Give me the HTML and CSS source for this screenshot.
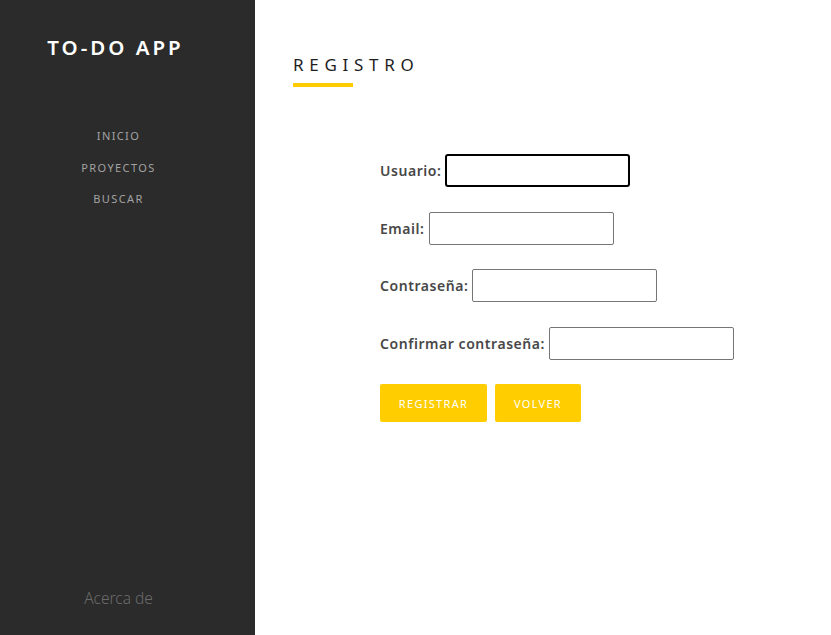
FILE: index.html
```html
<!DOCTYPE html>
<html lang="es">
<head>
<meta charset="utf-8">
<title>TO-DO APP - Registro</title>
<link rel="stylesheet" href="styles.css">
</head>
<body>
<div class="layout">
  <aside class="sidebar">
    <div class="brand">TO-DO APP</div>
    <nav class="nav">
      <a class="nav-link" href="#">INICIO</a>
      <a class="nav-link" href="#">PROYECTOS</a>
      <a class="nav-link" href="#">BUSCAR</a>
    </nav>
    <div class="about">Acerca de</div>
  </aside>
  <main class="main">
    <h1 class="page-title">REGISTRO</h1>
    <div class="title-bar"></div>
    <form class="form">
      <div class="row"><label class="label">Usuario:</label><input class="input input-focus" type="text"></div>
      <div class="row"><label class="label">Email:</label><input class="input" type="text"></div>
      <div class="row"><label class="label">Contraseña:</label><input class="input" type="password"></div>
      <div class="row"><label class="label">Confirmar contraseña:</label><input class="input" type="password"></div>
      <div class="actions">
        <button class="btn btn-register" type="button">REGISTRAR</button>
        <button class="btn btn-back" type="button">VOLVER</button>
      </div>
    </form>
  </main>
</div>
</body>
</html>
```
FILE: styles.css
```css
* { box-sizing: border-box; }
html, body { margin: 0; height: 100%; }
body {
  font-family: "Noto Sans", "Lato", sans-serif;
  background: #fff;
}
.layout {
  display: flex;
  height: 635px;
}
.sidebar {
  width: 255px;
  flex-shrink: 0;
  background: #2b2b2b;
  display: flex;
  flex-direction: column;
  align-items: center;
  padding: 33px 18px 0 0;
}
.brand {
  color: #fff;
  font-size: 20.5px;
  font-weight: 600;
  letter-spacing: 3px;
  line-height: 28px;
  margin-left: -6px;
}
.nav {
  display: flex;
  flex-direction: column;
  align-items: center;
  margin-top: 65px;
  gap: 12px;
}
.nav-link {
  color: #a3a3a3;
  font-size: 11px;
  font-weight: 400;
  letter-spacing: 1.4px;
  text-decoration: none;
  line-height: 19.5px;
}
.about {
  margin-top: auto;
  margin-bottom: 26px;
  color: #6a6a6a;
  font-size: 15.5px;
  font-weight: 300;
}
.main {
  flex: 1;
  padding: 52px 0 0 38px;
}
.page-title {
  margin: 0;
  font-size: 17px;
  font-weight: 400;
  letter-spacing: 5.7px;
  color: #1e1e1e;
  line-height: 26px;
}
.title-bar {
  width: 60px;
  height: 4px;
  background: #ffcc00;
  margin-top: 5px;
}
.form {
  margin-top: 67px;
  margin-left: 87px;
  display: flex;
  flex-direction: column;
  gap: 24.5px;
}
.row {
  display: flex;
  align-items: center;
  gap: 4px;
}
.label {
  font-size: 14px;
  font-weight: 600;
  letter-spacing: 0.55px;
  color: #484848;
}
.input {
  width: 185px;
  height: 33px;
  border: 1px solid #767676;
  border-radius: 2px;
  background: #fff;
  font: inherit;
}
.input-focus {
  border: 2px solid #000;
  border-radius: 3px;
  outline: none;
}
.actions {
  display: flex;
  gap: 8px;
}
.btn {
  height: 38px;
  border: none;
  border-radius: 2px;
  background: #ffcd00;
  color: #fff;
  font-family: inherit;
  font-size: 11px;
  font-weight: 400;
  letter-spacing: 1.3px;
  padding: 0;
}
.btn-register { width: 107px; }
.btn-back { width: 86px; }
```
